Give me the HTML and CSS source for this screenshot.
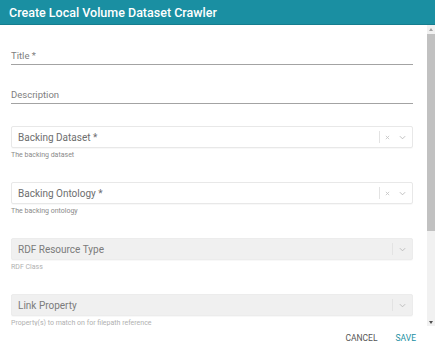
FILE: index.html
```html
<!DOCTYPE html>
<html lang="en">
<head>
    <meta charset="UTF-8">
    <meta name="viewport" content="width=device-width, initial-scale=1.0">
    <title>Create Local Volume Dataset Crawler</title>
    <link rel="stylesheet" href="styles.css">
</head>
<body>
    <div class="dialog">
        <div class="dialog-header">
            <h1>Create Local Volume Dataset Crawler</h1>
        </div>

        <div class="dialog-body">
            <div class="dialog-content">
                <div class="text-field first">
                    <span class="label">Title *</span>
                </div>
                <div class="text-field">
                    <span class="label">Description</span>
                </div>

                <div class="select-group">
                    <div class="select">
                        <span class="label">Backing Dataset *</span>
                        <span class="divider"></span>
                        <svg class="clear" viewBox="0 0 6 6"><path d="M1 1l4 4M5 1l-4 4"/></svg>
                        <svg class="chevron" viewBox="0 0 8 5"><path d="M1 1l3 3 3-3"/></svg>
                    </div>
                    <p class="helper">The backing dataset</p>
                </div>

                <div class="select-group">
                    <div class="select">
                        <span class="label">Backing Ontology *</span>
                        <span class="divider"></span>
                        <svg class="clear" viewBox="0 0 6 6"><path d="M1 1l4 4M5 1l-4 4"/></svg>
                        <svg class="chevron" viewBox="0 0 8 5"><path d="M1 1l3 3 3-3"/></svg>
                    </div>
                    <p class="helper">The backing ontology</p>
                </div>

                <div class="select-group">
                    <div class="select disabled">
                        <span class="label">RDF Resource Type</span>
                        <span class="divider"></span>
                        <svg class="chevron" viewBox="0 0 8 5"><path d="M1 1l3 3 3-3"/></svg>
                    </div>
                    <p class="helper">RDF Class</p>
                </div>

                <div class="select-group">
                    <div class="select disabled">
                        <span class="label">Link Property</span>
                        <span class="divider"></span>
                        <svg class="chevron" viewBox="0 0 8 5"><path d="M1 1l3 3 3-3"/></svg>
                    </div>
                    <p class="helper">Property(s) to match on for filepath reference</p>
                </div>
            </div>

            <div class="scrollbar">
                <div class="scroll-button">
                    <svg viewBox="0 0 4 3"><path d="M2 0L4 3H0z" fill="#a3a3a3"/></svg>
                </div>
                <div class="scroll-track">
                    <div class="scroll-thumb"></div>
                </div>
                <div class="scroll-button">
                    <svg viewBox="0 0 4 3"><path d="M0 0H4L2 3z" fill="#505050"/></svg>
                </div>
            </div>
        </div>

        <div class="dialog-actions">
            <a href="#" class="button">Cancel</a>
            <a href="#" class="button primary">Save</a>
        </div>
    </div>
</body>
</html>
```

FILE: styles.css
```css
* {
    margin: 0;
    padding: 0;
    box-sizing: border-box;
}

body {
    font-family: Roboto, "Liberation Sans", Arial, sans-serif;
    background: white;
    width: 435px;
    height: 348px;
    overflow: hidden;
}

.dialog {
    display: flex;
    flex-direction: column;
    height: 348px;
}

.dialog-header {
    height: 25px;
    background: #1a8fa2;
    border-bottom: 1px solid #157d8e;
    padding: 0 9px;
    display: flex;
    align-items: center;
}

.dialog-header h1 {
    color: white;
    font-size: 12.5px;
    font-weight: 500;
}

.dialog-body {
    height: 301px;
    display: flex;
}

.dialog-content {
    flex: 1;
    overflow: hidden;
    padding: 0 14px 0 11px;
}

/* fake scrollbar, the headless browser hides the real one */
.scrollbar {
    width: 8px;
    display: flex;
    flex-direction: column;
    background: #f1f1f1;
}

.scroll-button {
    height: 8px;
    display: flex;
    align-items: center;
    justify-content: center;
}

.scroll-button svg {
    width: 4px;
    height: 3px;
}

.scroll-track {
    flex: 1;
    padding-top: 1px;
}

.scroll-thumb {
    height: 197px;
    background: #c1c1c1;
}

.label {
    font-size: 9.5px;
    color: #808080;
    white-space: nowrap;
}

.text-field {
    height: 20px;
    margin-top: 19px;
    border-bottom: 1px solid #a3a3a3;
    display: flex;
    align-items: flex-end;
    padding-bottom: 3px;
}

.text-field.first {
    margin-top: 20px;
}

.select-group {
    margin-top: 22px;
}

.select {
    height: 22px;
    border: 1px solid #e8e8e8;
    border-radius: 2px;
    display: flex;
    align-items: center;
    padding: 0 6px;
    box-shadow: 0 1px 1px rgba(0, 0, 0, 0.03);
}

.select .label {
    flex: 1;
    font-size: 10px;
    color: #6e6e6e;
}

.select.disabled {
    background: #f0f0f0;
    border-color: #ececec;
}

.select.disabled .label {
    color: #7b7b7b;
}

.divider {
    width: 1px;
    height: 12px;
    background: #e3e3e3;
    margin-right: 5px;
}

.clear {
    width: 5px;
    height: 5px;
    stroke: #c4c4c4;
    stroke-width: 1;
    fill: none;
    margin-right: 9px;
}

.chevron {
    width: 7px;
    height: 5px;
    stroke: #b8b8b8;
    stroke-width: 1;
    fill: none;
}

.select.disabled .divider {
    margin-right: 6px;
}

.helper {
    margin-top: 3px;
    font-size: 7px;
    line-height: 9px;
    color: #8a8a8a;
}

.select.disabled + .helper {
    color: #b0b0b0;
}

.dialog-actions {
    flex: 1;
    display: flex;
    justify-content: flex-end;
    align-items: center;
    gap: 18px;
    padding: 2px 19px 0 0;
}

.button {
    font-size: 8.5px;
    text-transform: uppercase;
    text-decoration: none;
    color: #555;
}

.button.primary {
    color: #1a8fa2;
}
```
